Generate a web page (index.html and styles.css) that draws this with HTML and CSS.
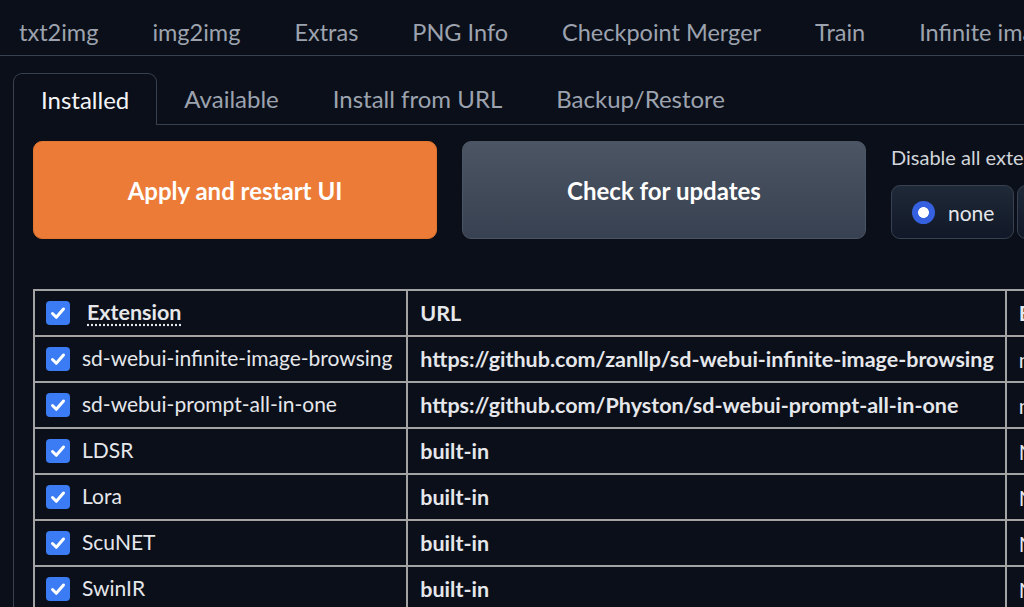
FILE: index.html
```html
<!DOCTYPE html>
<html>
<head>
<meta charset="utf-8">
<link rel="stylesheet" href="styles.css">
</head>
<body>
<div class="topnav">
  <div class="ttab">txt2img</div>
  <div class="ttab">img2img</div>
  <div class="ttab">Extras</div>
  <div class="ttab">PNG Info</div>
  <div class="ttab">Checkpoint Merger</div>
  <div class="ttab">Train</div>
  <div class="ttab">Infinite image browsing</div>
  <div class="ttab">Settings</div>
</div>
<div class="main">
  <div class="subnav">
    <div class="stab active">Installed</div>
    <div class="stab">Available</div>
    <div class="stab">Install from URL</div>
    <div class="stab">Backup/Restore</div>
  </div>
  <div class="panel">
    <div class="actions">
      <button class="btn primary">Apply and restart UI</button>
      <button class="btn secondary">Check for updates</button>
      <div class="disable">
        <div class="dlabel">Disable all extensions</div>
        <div class="radios">
          <label class="ropt"><span class="rdot on"></span>none</label>
          <label class="ropt"><span class="rdot"></span>extra</label>
          <label class="ropt"><span class="rdot"></span>all</label>
        </div>
      </div>
    </div>
    <table class="ext">
      <thead>
        <tr>
          <th class="c1"><span class="cb"></span><abbr class="hdr">Extension</abbr></th>
          <th class="c2">URL</th>
          <th class="c3">Branch</th>
        </tr>
      </thead>
      <tbody>
        <tr><td class="c1"><span class="cb"></span>sd-webui-infinite-image-browsing</td><td class="c2 url">https://github.com/zanllp/sd-webui-infinite-image-browsing</td><td class="c3">main</td></tr>
        <tr><td class="c1"><span class="cb"></span>sd-webui-prompt-all-in-one</td><td class="c2 url">https://github.com/Physton/sd-webui-prompt-all-in-one</td><td class="c3">main</td></tr>
        <tr><td class="c1"><span class="cb"></span>LDSR</td><td class="c2 url">built-in</td><td class="c3">None</td></tr>
        <tr><td class="c1"><span class="cb"></span>Lora</td><td class="c2 url">built-in</td><td class="c3">None</td></tr>
        <tr><td class="c1"><span class="cb"></span>ScuNET</td><td class="c2 url">built-in</td><td class="c3">None</td></tr>
        <tr><td class="c1"><span class="cb"></span>SwinIR</td><td class="c2 url">built-in</td><td class="c3">None</td></tr>
      </tbody>
    </table>
  </div>
</div>
</body>
</html>
```
FILE: styles.css
```css
html, body {
  margin: 0;
  padding: 0;
  background: #0b0f19;
  overflow: hidden;
  width: 1024px;
  height: 607px;
}
body {
  font-family: Lato, "Liberation Sans", sans-serif;
  color: #e5e7eb;
}
.topnav {
  display: flex;
  gap: 54px;
  padding-left: 19px;
  height: 55px;
  align-items: center;
  border-bottom: 1px solid #374151;
  white-space: nowrap;
  width: 1400px;
}
.ttab {
  font-size: 23.5px;
  color: #9ca3af;
  padding-top: 8px;
}
.main {
  margin-left: 13px;
  margin-top: 17px;
}
.subnav {
  display: flex;
  height: 51px;
  border-bottom: 1px solid #374151;
  white-space: nowrap;
}
.stab {
  font-size: 24px;
  color: #9ca3af;
  padding: 0 27px;
  display: flex;
  align-items: center;
}
.stab.active {
  color: #f3f4f6;
  padding: 0 27px;
  border: 1px solid #374151;
  border-bottom: none;
  margin-bottom: -1px;
  border-radius: 9px 9px 0 0;
  background: #0b0f19;
  height: 52px;
  box-sizing: border-box;
}
.panel {
  border-left: 1px solid #374151;
  padding: 16px 0 0 19px;
  height: 600px;
}
.actions {
  display: flex;
  align-items: flex-start;
  white-space: nowrap;
}
.btn {
  font-family: Lato, "Liberation Sans", sans-serif;
  font-weight: bold;
  font-size: 24px;
  color: #ffffff;
  height: 98px;
  border-radius: 9px;
  flex: none;
}
.primary {
  width: 404px;
  background: #eb7b37;
  border: 1px solid #e2762f;
}
.secondary {
  width: 404px;
  margin-left: 25px;
  background: linear-gradient(180deg, #4b5563 0%, #374151 100%);
  border: 1px solid #4b5563;
}
.disable {
  margin-left: 25px;
  flex: none;
}
.dlabel {
  font-size: 20px;
  color: #d1d5db;
  margin-top: 4px;
  height: 40px;
}
.radios {
  display: flex;
  gap: 3px;
}
.ropt {
  display: flex;
  align-items: center;
  height: 54px;
  box-sizing: border-box;
  padding: 0 19px 0 20px;
  border: 1px solid #374151;
  border-radius: 9px;
  background: linear-gradient(180deg, #1f2937 0%, #111827 100%);
  font-size: 21px;
  color: #e5e7eb;
}
.rdot {
  width: 23px;
  height: 23px;
  border-radius: 50%;
  box-sizing: border-box;
  border: 1px solid #4b5563;
  background: #374151;
  margin-right: 13px;
}
.rdot.on {
  background: radial-gradient(circle, #ffffff 0 5px, #3561e0 5.8px);
  border: none;
}
.ext {
  border-collapse: collapse;
  margin-top: 50px;
  table-layout: fixed;
  width: 1200px;
  font-size: 21px;
}
.ext th, .ext td {
  border: 2px solid #a3a3a3;
  height: 44px;
  padding: 0 12px;
  text-align: left;
  white-space: nowrap;
  overflow: hidden;
  vertical-align: middle;
}
.ext th {
  font-weight: bold;
  font-size: 21.5px;
}
.ext td.c1, .ext th.c1 {
  padding-left: 11px;
}
.c1 { width: 348px; }
.c2 { width: 572px; }
.c3 { width: 200px; }
.url {
  font-weight: bold;
  font-size: 21.5px;
}
.cb {
  display: inline-block;
  width: 24px;
  height: 24px;
  border-radius: 4px;
  background: #3b7cf4 url("data:image/svg+xml;utf8,<svg xmlns='http://www.w3.org/2000/svg' viewBox='0 0 24 24'><path d='M6.5 12.5l3.8 3.8 7.2-8.3' fill='none' stroke='white' stroke-width='3' stroke-linecap='round' stroke-linejoin='round'/></svg>") center/100% no-repeat;
  vertical-align: middle;
  margin-right: 12px;
  position: relative;
  top: -2px;
}
.hdr {
  text-decoration: underline dotted;
  text-underline-offset: 4px;
  margin-left: 5px;
}
```
